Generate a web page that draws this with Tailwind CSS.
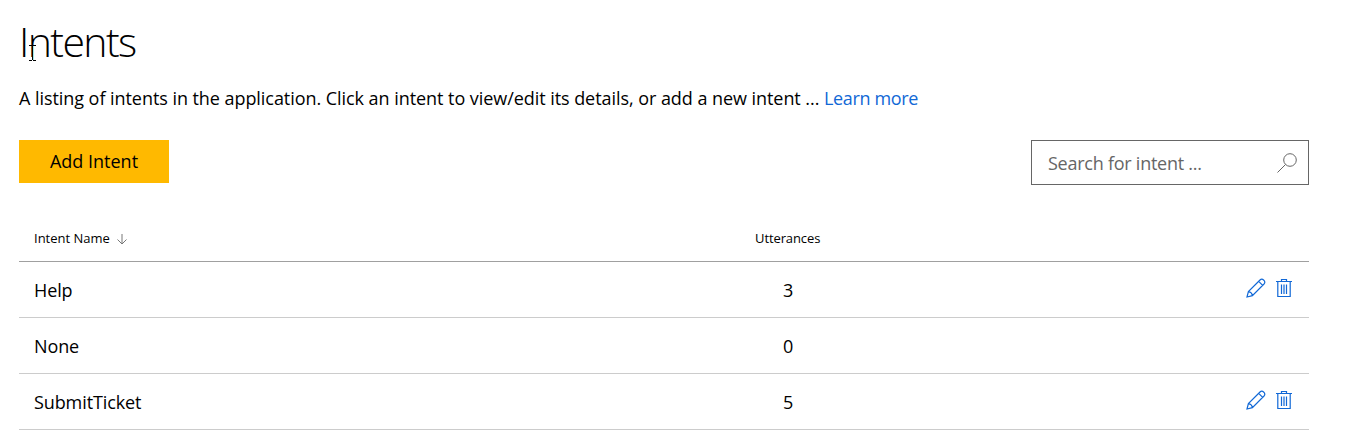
<!DOCTYPE html>
<html lang="en">
<head>
<meta charset="utf-8">
<title>Intents</title>
<script src="https://cdn.jsdelivr.net/npm/@tailwindcss/browser@4"></script>
</head>
<body class="h-[444px] overflow-hidden bg-white font-['Open_Sans','Noto_Sans',sans-serif] text-[18px] text-black">
<svg class="hidden">
  <symbol id="pencil" viewBox="0 0 20 20"><path d="M1 19 L2.4 13.6 L14 2 Q15.8.3 17.8 2.2 Q19.7 4.2 18 6 L6.4 17.6 Z M2.4 13.6 Q5.9 14.1 6.4 17.6 M12.7 3.3 L16.7 7.3" fill="none" stroke="currentColor" stroke-width="1.2"/></symbol>
  <symbol id="trash" viewBox="0 0 16 20"><path d="M0 3.5H16M5.5 3.5V1.5H10.5V3.5M1.8 3.5V18.5H14.2V3.5M5.5 6.5V16M8 6.5V16M10.5 6.5V16" fill="none" stroke="currentColor" stroke-width="1.2"/></symbol>
</svg>
<main class="ml-[19px] w-[1290px]">
  <header class="relative h-[140px] pt-4">
    <h1 class="h-[50px] font-['Open_Sans'] text-[41px] leading-[50px] font-light tracking-[-1.6px] whitespace-nowrap">Intents</h1>
    <svg class="absolute top-[45px] left-[10px] h-[16px] w-[8px]" viewBox="0 0 8 16" shape-rendering="crispEdges"><path d="M3 1H5V15H3Z" fill="#9fe8e8"/><path d="M0 .5H3M4 .5H7M3.5 1V15M0 15.5H3M4 15.5H7" fill="none" stroke="#000"/></svg>
    <p class="mt-5 h-6 leading-6 tracking-[-0.055px] whitespace-nowrap">A listing of intents in the application. Click an intent to view/edit its details, or add a new intent ... <a class="tracking-[-0.35px] text-[#1168d6]">Learn more</a></p>
  </header>
  <div class="flex items-start justify-between">
    <button class="h-[43px] w-[150px] bg-[#ffb900] leading-[43px]">Add Intent</button>
    <div class="flex h-[45px] w-[278px] items-center justify-between border border-[#666] pr-[11px] pl-4 text-[#666]">
      <span class="pt-0.5 tracking-[-0.25px]">Search for intent ...</span>
      <svg class="h-5 w-5" viewBox="0 0 20 20" fill="none" stroke="currentColor"><circle cx="13" cy="7" r="6.3"/><path d="M8.5 11.5L.5 19.5"/></svg>
    </div>
  </div>
  <section class="mt-[30px]">
    <div class="flex h-[47px] items-center border-b border-[#a0a0a0] pt-0.5 pl-[15px] text-[13px]">
      <div class="flex w-[721px] items-center gap-[7px]"><span>Intent Name</span><svg class="h-[11px] w-[10px] text-[#777]" viewBox="0 0 10 11" fill="none" stroke="currentColor"><path d="M5 0V10M.5 5.5L5 10L9.5 5.5"/></svg></div>
      <div class="tracking-[-0.1px]">Utterances</div>
    </div>
    <div class="flex h-14 items-center border-b border-[#ccc] pt-0.5 pr-[17px] pl-[15px]"><span class="w-[749px] tracking-[-0.1px]">Help</span><span>3</span><div class="ml-auto flex gap-[10px] pb-[5px] text-[#1168d6]"><svg class="h-5 w-5"><use href="#pencil"/></svg><svg class="h-5 w-4"><use href="#trash"/></svg></div></div>
    <div class="flex h-14 items-center border-b border-[#ccc] pt-0.5 pr-[17px] pl-[15px]"><span class="w-[749px] tracking-[-0.1px]">None</span><span>0</span></div>
    <div class="flex h-14 items-center border-b border-[#ccc] pt-0.5 pr-[17px] pl-[15px]"><span class="w-[749px] tracking-[-0.1px]">SubmitTicket</span><span>5</span><div class="ml-auto flex gap-[10px] pb-[5px] text-[#1168d6]"><svg class="h-5 w-5"><use href="#pencil"/></svg><svg class="h-5 w-4"><use href="#trash"/></svg></div></div>
  </section>
</main>
</body>
</html>
